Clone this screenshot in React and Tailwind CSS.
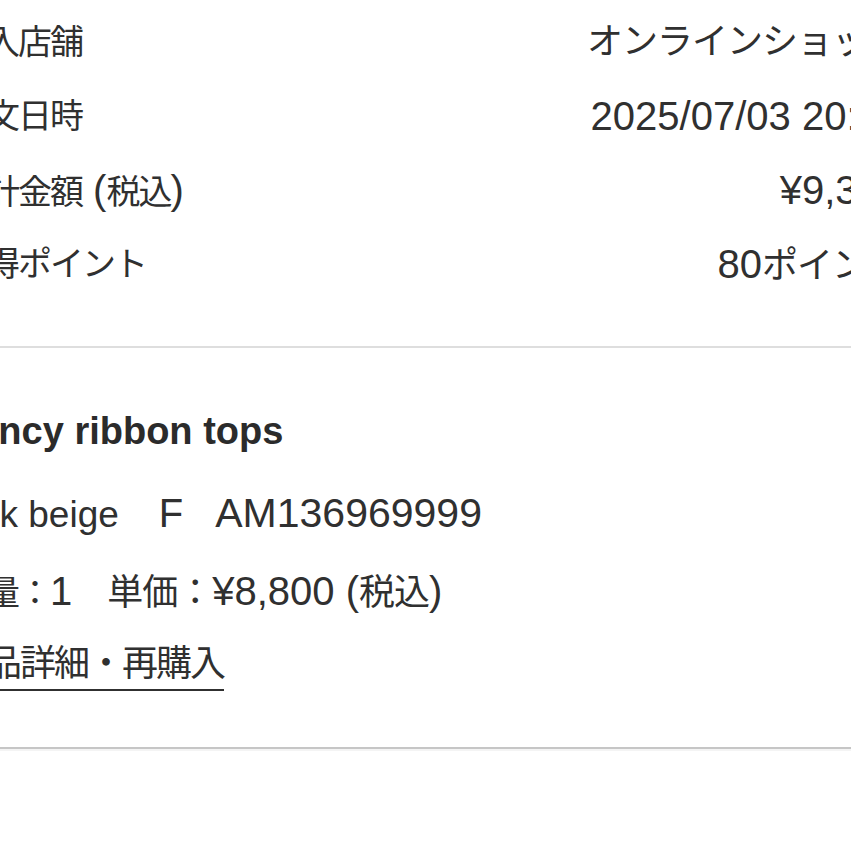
import React from 'react';

const ORDER_INFO = [
    { label: [['j', '購入店舗']], value: [['j', 'オンラインショップ']] },
    { label: [['j', '注文日時']], value: [['l', '2025/07/03 20:15']] },
    { label: [['j', '合計金額'], ['l', ' ('], ['j', '税込'], ['l', ')']], value: [['l', '¥9,350']] },
    { label: [['j', '獲得ポイント']], value: [['l', '80'], ['j', 'ポイント']] }
];

// Latin and Japanese runs are sized apart so their widths match the phone font
const Runs = ({ parts, big }) => (
    <>
        {parts.map(([kind, text], i) => (
            <span
                key={i}
                className={
                    kind === 'l'
                        ? 'text-[40px] leading-[40px]'
                        : big
                            ? 'text-[36px] tracking-[-1px] leading-[40px]'
                            : 'text-[34px] tracking-[-2px] leading-[40px]'
                }
            >
                {text}
            </span>
        ))}
    </>
);

const InfoRow = ({ row }) => (
    <div className="h-[74px] flex items-center justify-between">
        <div className="h-[40px] leading-[40px] whitespace-nowrap">
            <Runs parts={row.label} />
        </div>
        <div className="h-[40px] leading-[40px] whitespace-nowrap text-right">
            <Runs parts={row.value} big />
        </div>
    </div>
);

export default function App() {
    return (
        <div
            className="w-[851px] h-[851px] overflow-hidden bg-white text-[#303030]"
            style={{ fontFamily: '"Liberation Sans", "Noto Sans CJK JP", sans-serif' }}
        >
            <div className="w-[948px] ml-[-46px] pt-[5px]">
                {ORDER_INFO.map((row, i) => (
                    <InfoRow key={i} row={row} />
                ))}
            </div>

            <div className="mt-[45px] h-[2px] bg-[#dedede]" />

            <div className="w-[948px] ml-[-46px]">
                <div className="mt-[63px] h-[40px] leading-[40px] whitespace-nowrap text-[38px] font-bold text-[#2b2b2b]">
                    Fancy ribbon tops
                </div>

                <div className="mt-[42px] h-[40px] leading-[40px] whitespace-nowrap flex items-baseline">
                    <span className="text-[37px] ml-[-8px]">Pink beige</span>
                    <span className="text-[40px] ml-[40px]">F</span>
                    <span className="text-[41px] ml-[32px]">AM136969999</span>
                </div>

                <div className="mt-[38px] h-[40px] leading-[40px] whitespace-nowrap">
                    <Runs parts={[['j', '数量：'], ['l', '1']]} />
                    <span className="text-[36px] tracking-[-1px] leading-[40px]">　単価：</span>
                    <Runs parts={[['l', '¥8,800 ('], ['j', '税込'], ['l', ')']]} big />
                </div>

                <div className="mt-[33px] ml-[-2px]">
                    <span className="inline-block h-[47px] pb-[5px] border-b-2 border-[#303030] text-[36px] tracking-[-2px] leading-[40px] whitespace-nowrap">
                        商品詳細・再購入
                    </span>
                </div>
            </div>

            <div className="mt-[56px] h-[2px] bg-[#c6c6c6]" />
            <div className="h-[2px] bg-[#f4f4f4]" />
        </div>
    );
}
